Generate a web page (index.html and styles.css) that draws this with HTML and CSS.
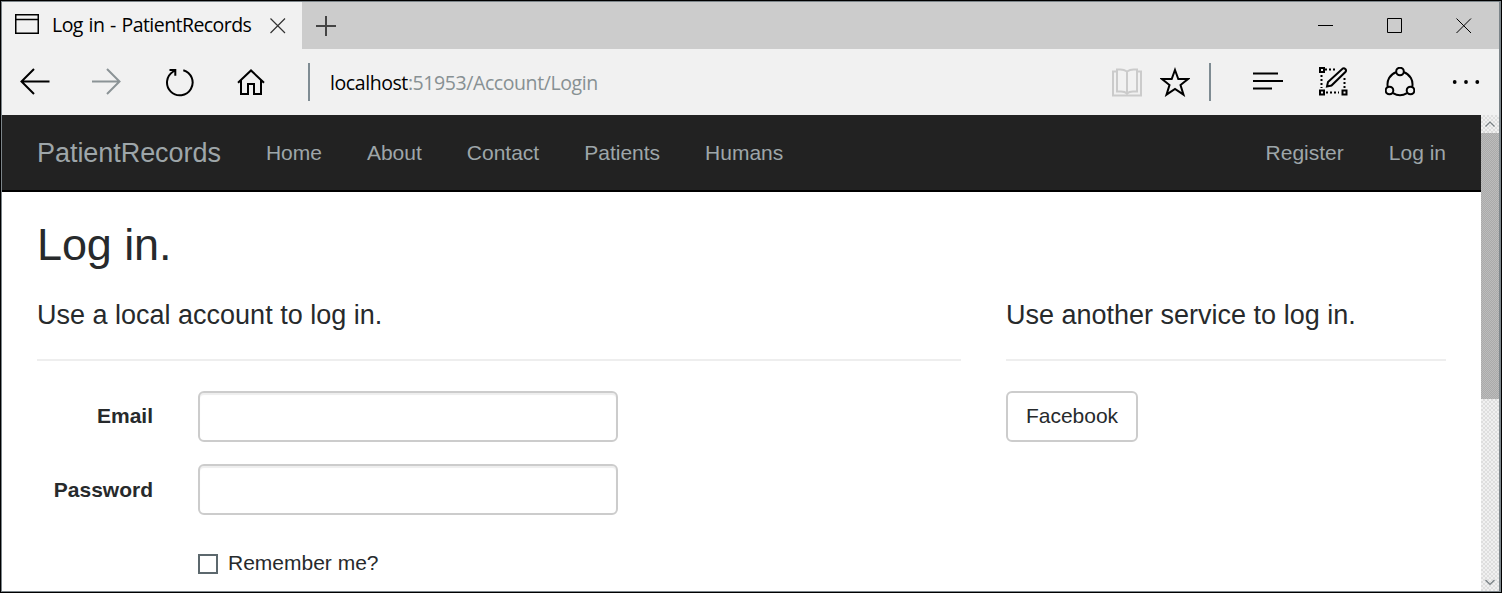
FILE: index.html
```html
<!DOCTYPE html>
<html lang="en">
<head>
<meta charset="utf-8">
<title>Log in - PatientRecords</title>
<link rel="stylesheet" href="styles.css">
</head>
<body>
<div class="window">
  <div class="inner">
    <header class="titlebar">
      <div class="tab">
        <svg class="page-icon" width="24" height="20" viewBox="0 0 24 20"><path d="M.75.75h22.5v18.5H.75zM1 5.5h22"/></svg>
        <span class="tab-title">Log in - PatientRecords</span>
        <svg class="thin" width="16" height="16" viewBox="0 0 16 16"><path d="M.5.5l14.500 14.500M15 .5L.5 15"/></svg>
      </div>
      <svg class="new-tab" width="20" height="20" viewBox="0 0 20 20"><path d="M0 10h20M10 0v20"/></svg>
      <div class="controls">
        <svg width="16" height="16" viewBox="0 0 16 16"><path d="M0 7.500h15"/></svg>
        <svg width="16" height="16" viewBox="0 0 16 16"><path d="M.5.500h14v14H.5z"/></svg>
        <svg width="16" height="16" viewBox="0 0 16 16"><path d="M.5.5l14.500 14.500M15 .5L.5 15"/></svg>
      </div>
    </header>
    <div class="toolbar">
      <svg class="icon back" viewBox="0 0 30 30"><path d="M29.500 14.500H1.500M14 2L1.500 14.500 14 27"/></svg>
      <svg class="icon forward" viewBox="0 0 30 30"><path d="M0 14.500h28M15 2l12.500 12.500L15 27"/></svg>
      <svg class="icon refresh" viewBox="0 0 30 30"><path d="M18.300 3.200A12.800 12.800 0 1 1 8.300 4.500L10.300 3M4.500 3H10.300V8.700"/></svg>
      <svg class="icon home" viewBox="0 0 30 30"><path d="M2 15.800L15 3.500l13 12.300M5 13.500V27h7V17h6v10h7V13.500"/></svg>
      <span class="divider"></span>
      <div class="address"><b>localhost</b>:51953/Account/Login</div>
      <svg class="icon book" viewBox="0 0 30 30"><path d="M15 4.500Q12 2.500 8.500 2.500H5v22h4q4 0 6 2 2-2 6-2h4v-22h-3.500Q18 2.500 15 4.500v22M5 4.500H1v24h28v-24h-4"/></svg>
      <svg class="icon star" viewBox="0 0 30 30"><path d="M15 3l3.300 9H28l-7.500 6 3 9.700L15 22l-8.500 5.700 3-9.700L2 12h9.700z"/></svg>
      <span class="divider"></span>
      <svg class="icon hub" viewBox="0 0 30 30"><path d="M0 6.500h25M0 14h30M0 21.500h19"/></svg>
      <svg class="icon note" viewBox="0 0 30 30"><path class="dots" d="M7 2.500h11M3.500 8v13M8 25.500h13M26.500 21V11"/><path d="M2 1h4v4H2zM2 23.500h4v4H2zM24.500 23.500h4v4h-4z"/><path class="pencil" d="M9 19.500l1-4.500L24.500 1.700q1.500-1 2.800.3t.3 2.800L13.500 18.500z"/></svg>
      <svg class="icon share" viewBox="0 0 30 30"><path d="M11 5.200A12.800 12.800 0 0 0 2.800 20M19 5.200A12.800 12.800 0 0 1 27.200 20M8 26.200q7 4.200 14 0"/><circle cx="15" cy="4.500" r="3.800"/><circle cx="4.500" cy="23.500" r="3.800"/><circle cx="25.500" cy="23.500" r="3.800"/></svg>
      <svg class="icon more" viewBox="0 0 30 30"><circle cx="2.700" cy="15" r="1.900"/><circle cx="14" cy="15" r="1.900"/><circle cx="25.300" cy="15" r="1.900"/></svg>
    </div>
    <div class="viewport">
      <div class="page">
        <nav class="navbar">
          <a class="brand">PatientRecords</a>
          <a>Home</a><a>About</a><a>Contact</a><a>Patients</a><a>Humans</a>
          <a class="register">Register</a><a>Log in</a>
        </nav>
        <main class="content">
          <h2>Log in.</h2>
          <div class="columns">
            <section class="local">
              <h4>Use a local account to log in.</h4>
              <hr>
              <form class="form">
                <label class="email-label" for="email">Email</label><input class="field" id="email" type="text">
                <label for="password">Password</label><input class="field" id="password" type="password">
                <div class="remember"><input class="check" id="remember" type="checkbox"><label for="remember">Remember me?</label></div>
              </form>
            </section>
            <section class="social">
              <h4>Use another service to log in.</h4>
              <hr>
              <button class="button">Facebook</button>
            </section>
          </div>
        </main>
      </div>
      <div class="scrollbar">
        <svg width="18" height="18" viewBox="0 0 18 18"><path d="M4.500 11.500L9 7l4.500 4.500"/></svg>
        <div class="thumb"></div>
        <svg class="down" width="18" height="18" viewBox="0 0 18 18"><path d="M4.500 7L9 11.500 13.500 7"/></svg>
      </div>
    </div>
  </div>
</div>
</body>
</html>
```

FILE: styles.css
```css
* { box-sizing: border-box; }
body { margin: 0; overflow: hidden; }
svg { display: block; flex: none; fill: none; stroke: #000; }

.window { width: 1502px; height: 593px; border: 1px solid #000; }
.inner {
  height: 591px;
  border: 1px solid #7c858a;
  border-right-width: 2px;
  display: flex;
  flex-direction: column;
}

.titlebar { display: flex; align-items: center; height: 47px; flex: none; background: #ccc; }
.tab { display: flex; align-items: center; width: 300px; height: 47px; padding-left: 13px; background: #f1f1f1; }
.page-icon { stroke-width: 1.5; margin-top: -3px; }
.tab-title {
  width: 231px;
  padding: 0 0 2px 13px;
  font: 19.5px/26px "Open Sans", sans-serif;
  letter-spacing: -0.55px;
  word-spacing: 1.2px;
  white-space: nowrap;
}
.thin { stroke: #333; stroke-width: 1.2; }
.new-tab { margin-left: 14px; stroke: #444; stroke-width: 2; }
.controls { display: flex; gap: 53px; margin-left: auto; margin-right: 27px; }

.toolbar { display: flex; align-items: center; height: 66px; flex: none; background: #f1f1f1; }
.icon { width: 30px; height: 30px; stroke-width: 2; }
.back { margin-left: 18px; }
.forward { margin-left: 42px; stroke: #8b9396; }
.refresh { margin-left: 43px; }
.home { margin-left: 41px; margin-right: 42px; }
.divider { width: 2px; height: 38px; background: #7f8c93; }
.address {
  flex: 1;
  padding: 2px 0 0 20px;
  font: 19.5px/26px "Open Sans", sans-serif;
  letter-spacing: -0.42px;
  color: #879093;
}
.address b { font-weight: 400; color: #000; }
.book { stroke: #cbcbcb; margin-right: 18px; }
.star { margin-right: 19px; }
.hub { margin-left: 42px; margin-right: 35px; }
.note { margin-right: 37px; }
.note .dots { stroke-dasharray: 2 2; }
.pencil { fill: #f1f1f1; }
.share { margin-right: 37px; }
.share circle { fill: #f1f1f1; }
.more { margin-right: 17px; fill: #000; stroke: none; }

.viewport { display: flex; flex: 1; min-height: 0; }
.page {
  flex: 1;
  background: #fff;
  color: #272a2c;
  font: 21px/30px "Liberation Sans", Arial, sans-serif;
}
.navbar {
  display: flex;
  align-items: center;
  gap: 45px;
  height: 77px;
  padding: 0 35px;
  background: #222;
  border-bottom: 2px solid #000;
  color: #9ea6a9;
}
.brand { font-size: 27px; letter-spacing: -0.05px; }
.register { margin-left: auto; }
.content { padding: 28px 35px 0; }
h2 { margin: 0; font-size: 45px; line-height: 50px; font-weight: 400; letter-spacing: -0.1px; }
h4 { margin: 0; font-size: 27px; line-height: 30px; font-weight: 400; }
hr { height: 2px; margin: 29px 0 30px; border: 0; background: #eee; }
.columns { display: flex; justify-content: space-between; margin-top: 30px; }
.local { width: 924px; }
.social { width: 440px; }
.form { display: grid; grid-template-columns: 116px 420px; column-gap: 45px; row-gap: 22px; align-items: center; }
.form > label { text-align: right; font-weight: 700; }
.form > .email-label { padding-bottom: 2px; }
.field {
  width: 420px;
  height: 51px;
  border: 2px solid #ccc;
  border-radius: 6px;
  box-shadow: inset 0 2px 1px #eee;
  background: #fff;
}
.remember { grid-column: 2; display: flex; align-items: center; gap: 10px; padding-top: 11px; }
.check {
  appearance: none;
  width: 20px;
  height: 20px;
  margin: 2px 0 0;
  border: 2px solid #5c686d;
  background: #fff;
}
.button {
  width: 132px;
  height: 51px;
  padding: 0 0 2px;
  border: 2px solid #ccc;
  border-radius: 6px;
  background: #fff;
  color: inherit;
  font: inherit;
}

.scrollbar {
  display: flex;
  flex-direction: column;
  width: 18px;
  background: repeating-conic-gradient(#dedede 0 25%, #f0f0f0 0 50%) 0 0 / 4px 4px;
}
.scrollbar svg { stroke: #777f83; stroke-width: 1.2; }
.thumb { height: 266px; background: repeating-conic-gradient(#aaa 0 25%, #bcbcbc 0 50%) 0 0 / 2px 2px; }
.scrollbar .down { margin-top: auto; }
```
